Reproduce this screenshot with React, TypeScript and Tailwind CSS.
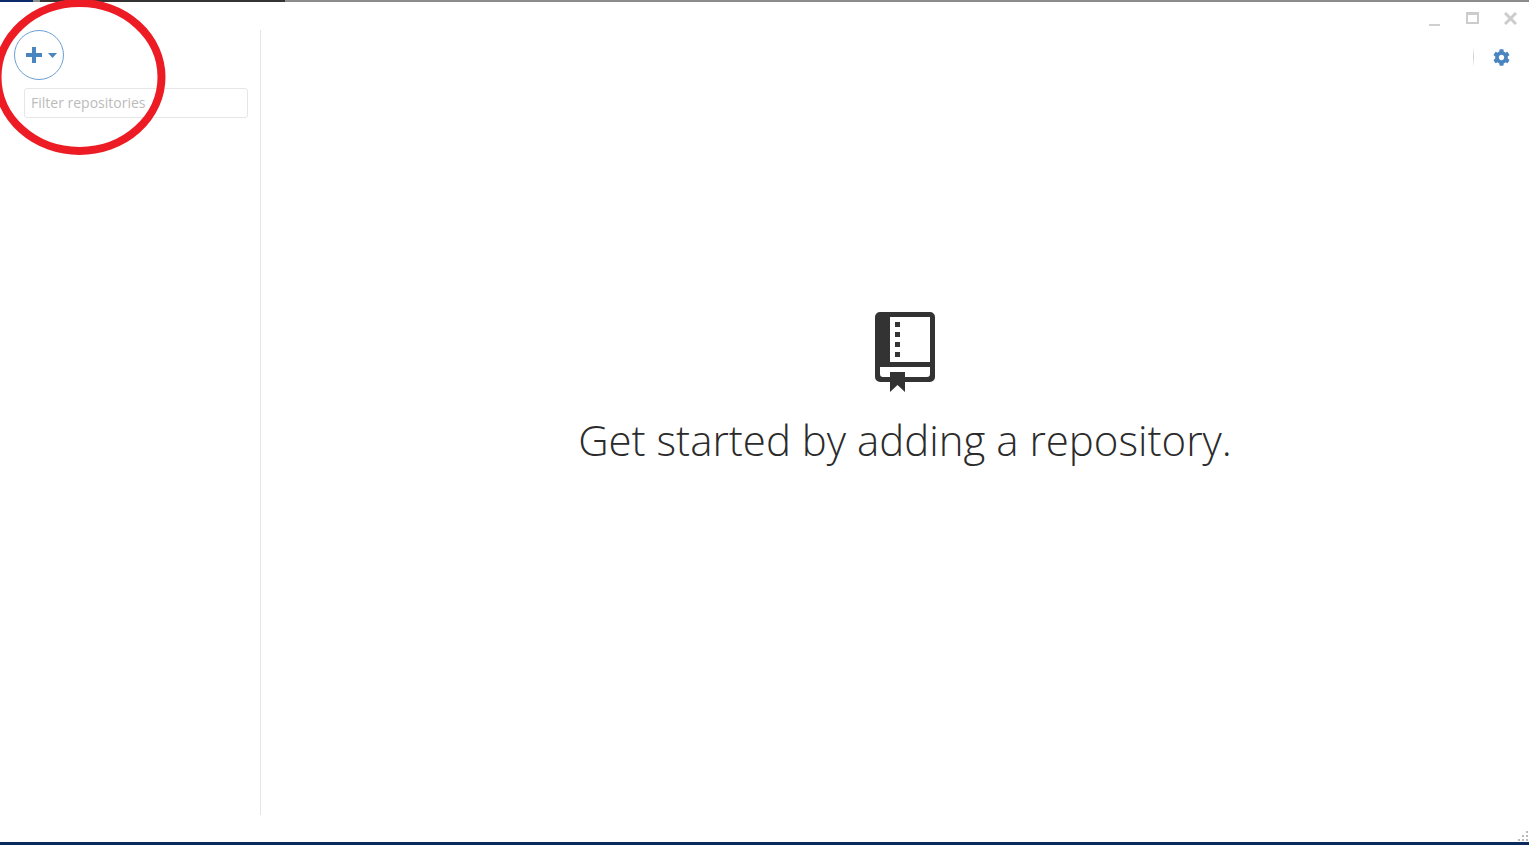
import { FaCog } from "react-icons/fa";

const BookIcon = () => (
  <svg width="60" height="80" viewBox="0 0 60 80" className="text-[#333333]">
    <path
      fill="currentColor"
      fillRule="evenodd"
      d="M5 0H55A5 5 0 0 1 60 5V65A5 5 0 0 1 55 70H30V80L22.500 73L15 80V70H5A5 5 0 0 1 0 65V5A5 5 0 0 1 5 0ZM15 5V50H55V5ZM5 55V62A3 3 0 0 0 8 65H15V60H30V65H52A3 3 0 0 0 55 62V55Z"
    />
    <rect x="20" y="10" width="5" height="5" fill="currentColor" />
    <rect x="20" y="20" width="5" height="5" fill="currentColor" />
    <rect x="20" y="30" width="5" height="5" fill="currentColor" />
    <rect x="20" y="40" width="5" height="5" fill="currentColor" />
  </svg>
);

const Sidebar = () => (
  <aside className="w-[261px] shrink-0 pt-[28px]">
    <div className="h-[785px] border-r border-[#e5e5e5] pr-3">
      <button className="ml-[14px] flex h-[50px] w-[50px] items-center justify-center gap-[6px] rounded-full border border-[#6a9fd4] bg-white pl-[5px]">
        <svg width="16" height="16" viewBox="0 0 16 16" className="text-[#4a85c0]">
          <path fill="currentColor" d="M6 0H10V6H16V10H10V16H6V10H0V6H6Z" />
        </svg>
        <svg width="9" height="5" viewBox="0 0 9 5" className="text-[#4a85c0]">
          <path fill="currentColor" d="M0 0H9L4.500 5Z" />
        </svg>
      </button>
      <div className="mt-[8px] ml-6 flex h-[30px] w-[224px] items-center rounded-[3px] border border-[#e6e6e6] px-[6px] pb-[2px] font-['Open_Sans',sans-serif] text-[14px] text-[#bbbbbb]">
        Filter repositories
      </div>
    </div>
  </aside>
);

export default function App() {
  return (
    <div className="relative flex h-[845px] w-[1529px] flex-col overflow-hidden bg-white">
      <div className="flex h-[2px] shrink-0">
        <div className="h-full w-[33px] bg-[#0b2a6c]" />
        <div className="h-full w-[7px] bg-[#8c8c8c]" />
        <div className="h-full w-[245px] bg-[#333333]" />
        <div className="h-full flex-1 bg-[#8c8c8c]" />
      </div>
      <div className="flex min-h-0 flex-1">
        <Sidebar />
        <main className="relative flex-1">
          <div className="flex justify-end pt-[10px] pr-[12px]">
            <div className="flex items-start">
              <div className="mt-[12px] h-[2px] w-[11px] bg-[#d0d0d0]" />
              <svg width="13" height="12" viewBox="0 0 13 12" className="ml-[26px] text-[#cccccc]">
                <path fill="currentColor" fillRule="evenodd" d="M0 0H13V12H0ZM2 3V10H11V3Z" />
              </svg>
              <svg width="13" height="13" viewBox="0 0 13 13" className="ml-[25px] text-[#cccccc]">
                <path stroke="currentColor" strokeWidth="3" d="M1 1L12 12M12 1L1 12" />
              </svg>
            </div>
          </div>
          <div className="mt-[21px] flex items-center justify-end pr-[19px]">
            <div className="mr-[19px] h-[20px] w-px bg-linear-to-b from-transparent via-[#cccccc] to-transparent" />
            <FaCog size={17} className="text-[#4a85c0]" />
          </div>
          <div className="mt-[245px] flex flex-col items-center pl-[20px]">
            <BookIcon />
            <p className="mt-[18px] font-['Open_Sans',sans-serif] text-[42px] leading-[60px] font-light text-[#2b2b2b]">
              Get started by adding a repository.
            </p>
          </div>
        </main>
      </div>
      <div className="relative h-[3px] shrink-0 bg-[#0b2a5c]">
        <svg width="10" height="10" viewBox="0 0 10 10" className="absolute right-[1px] bottom-[4px] text-[#bbbbbb]">
          <path
            fill="currentColor"
            d="M8 0H10V2H8ZM8 4H10V6H8ZM4 4H6V6H4ZM8 8H10V10H8ZM4 8H6V10H4ZM0 8H2V10H0Z"
          />
        </svg>
      </div>
      {/* red marker circle drawn over the screenshot */}
      <svg width="170" height="160" viewBox="0 0 170 160" className="pointer-events-none absolute top-0 left-0">
        <ellipse cx="79.500" cy="77" rx="82" ry="74" fill="none" stroke="#ed1c24" strokeWidth="8" />
      </svg>
    </div>
  );
}
